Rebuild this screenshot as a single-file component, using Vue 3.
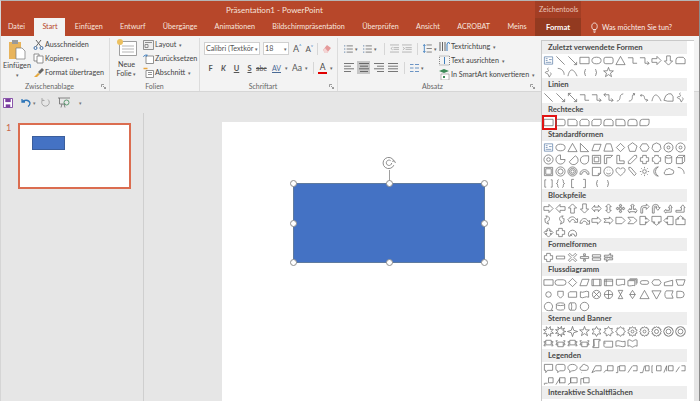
<script setup>
const poly = (n, r = 4.6, rot = -90, inner = null) => {
  const pts = []
  const count = inner ? n * 2 : n
  for (let i = 0; i < count; i++) {
    const a = ((rot + (360 / count) * i) * Math.PI) / 180
    const rad = inner && i % 2 ? inner : r
    pts.push(`${(6 + rad * Math.cos(a)).toFixed(2)} ${(6 + rad * Math.sin(a)).toFixed(2)}`)
  }
  return 'M' + pts.join('L') + 'Z'
}
const circ = (r, cx = 6, cy = 6) => `M${cx - r} ${cy}a${r} ${r} 0 1 0 ${2 * r} 0a${r} ${r} 0 1 0 ${-2 * r} 0Z`

const P = {
  tb: 'M1.5 2h9v8h-9zM3 4h2M3 6h2M6.5 5h3M3 8h6',
  line: 'M1.5 1.5L10.5 10.5',
  arrow: 'M1.5 1.5L10.5 10.5M10.5 7.5v3h-3',
  darrow: 'M1.5 1.5L10.5 10.5M10.5 7.5v3h-3M1.5 4.5v-3h3',
  rect: 'M1 2.5h10v7H1z',
  oval: 'M1 6a5 3.6 0 1 0 10 0a5 3.6 0 1 0-10 0',
  rrect: 'M3 2.5h6a2 2 0 0 1 2 2v3a2 2 0 0 1-2 2H3a2 2 0 0 1-2-2v-3a2 2 0 0 1 2-2z',
  tri: 'M6 1.5L11 10.5H1z',
  rtri: 'M1.5 1.5L10.5 10.5H1.5z',
  elbow: 'M1 3h5.5v6H11',
  elbowA: 'M1 3h5.5v6H11M9 7l2 2-2 2',
  elbowD: 'M3 1L1 3l2 2M1 3h5.5v6H11M9 7l2 2-2 2',
  rarrow: 'M1 4h5.5V1.5L11 6l-4.500 4.500V8H1z',
  darrowB: 'M4 1h4v5.500h2.500L6 11 1.500 6.500H4z',
  uarrowB: 'M4 11h4V5.500h2.500L6 1 1.500 5.500H4z',
  larrowB: 'M11 4H5.500V1.500L1 6l4.500 4.500V8H11z',
  lrarrow: 'M1 6l3-3.500V4.500h4V2.500L11 6 8 9.500V7.500H4v2z',
  udarrow: 'M6 1l3 3H7.500v4H9l-3 3-3-3h1.500V4H3z',
  quad: 'M6 1l1.500 2h-1v2.500H9v-1l2 1.500-2 1.500v-1H6.500V9h1L6 11 4.500 9h1V6.500H3v1L1 6l2-1.500v1h2.500V3h-1z',
  lrup: 'M6 1l2 2H7v4h2V6l2 2.500-2 2.500v-1.500H3V11L1 8.500 3 6v1h2V3H4z',
  bent: 'M2 11V6a3 3 0 0 1 3-3h3V1l3 3-3 3V5H5a1 1 0 0 0-1 1v5z',
  uturn: 'M1.500 11V5a3.500 3.500 0 0 1 7 0h1.500L7.500 8 5 5h1.500a1.500 1.500 0 0 0-3 0v6z',
  lup: 'M1 9l2-2v1h4V5H6l2-3 2 3H9v5H3v1z',
  bentup: 'M1 8h6V5H6l2.500-3L11 5h-1v5H1z',
  curveR: 'M3 1C8 1 8 6 5 7l1 3-3.500-2L2 4c2 0 3-1 1-3z',
  curveL: 'M9 1C4 1 4 6 7 7l-1 3 3.500-2L10 4C8 4 7 3 9 1z',
  curveU: 'M1 5c3-4 7-4 9 0l1.500-1v4H8l1-1c-2-3-4-3-6 1z',
  curveD: 'M1 9c1-6 7-7 9-2l1.500-1v4H8l1-1C7 6 4 6 3.500 9z',
  strip: 'M1 4h6V2l4 4-4 4V8H1z',
  notch: 'M1 4h6V2l4 4-4 4V8H1l2-2z',
  penta: 'M1 2.500h6.500L11 6l-3.500 3.500H1z',
  chev: 'M1 2.500h6L11 6 7 9.500H1L4 6z',
  callR: 'M1 1.500h6v3h1V3l3 3-3 3V7.500H7v3H1z',
  callD: 'M1 1.500h10v6H8v1h1.500L6 11 2.500 8.500H4v-1H1z',
  callL: 'M11 1.500H5v3H4V3L1 6l3 3V7.500h1v3h6z',
  callU: 'M1 10.500h10v-6H8v-1h1.500L6 1 2.500 3.500H4v1H1z',
  callQ: 'M4 4h1V3H4l2-2 2 2H7v1h1v1h1V4l2 2-2 2V7H8v1h1v0L6 11 3 8h1V7H3v1L1 6l2-2v1h1z',
  cross: 'M4 1.500h4V4h2.500v4H8v2.500H4V8H1.500V4H4z',
  circArrow: 'M2 10a4.500 4.500 0 1 1 8 0H8.500a2.500 2.500 0 1 0-5 0zM4 8l1.500 2',
  minus: 'M1.500 4.500h9v3h-9z',
  times: 'M3 1.500l3 3 3-3 1.500 1.500-3 3 3 3L9 10.500l-3-3-3 3L1.500 9l3-3-3-3z',
  divide: 'M1.500 5h9v2h-9zM5 2h2v2H5zM5 8h2v2H5z',
  equal: 'M1.500 3h9v2.500h-9zM1.500 6.500h9V9h-9z',
  neq: 'M1.500 3.500h5l1-2 1 .500-1 1.500h3v2H7l-.5 1h4v2h-5l-1 2-1-.5 1-1.500h-3v-2h4l.5-1h-4.500z',
  para: 'M3.500 2.500H11L8.500 9.500H1z',
  trap: 'M3.500 2H8.500L11 10H1z',
  dia: 'M6 1.500l4.500 4.500-4.500 4.500L1.500 6z',
  pent: poly(5, 5.2),
  hex: 'M3.500 2h5L11 6 8.500 10h-5L1 6z',
  hept: poly(7, 5),
  n10: poly(10, 5) + circ(1.6),
  n12: poly(12, 5) + circ(1.6),
  ring: circ(5) + 'M4 6a2 2 0 1 0 4 0a2 2 0 1 0-4 0',
  pie: 'M6 6V1a5 5 0 1 0 5 5z',
  chord: 'M9 2A5 5 0 1 1 2.500 8.500z',
  tear: 'M6 2a4.500 4.500 0 1 0 4.500 4.500V2z',
  frame: 'M1.500 1.500h9v9h-9zM3.500 3.500h5v5h-5z',
  half: 'M1.500 1.500h9L8 4H4v6.500H1.500z',
  lshape: 'M2 1.500h3v6h5v3H2z',
  diag: 'M1.500 8L8 1.500h2.500V4L4 10.500H1.500z',
  plaque: 'M4 1.500h4a2 2 0 0 0 2.500 2.500v4A2 2 0 0 0 8 10.500H4A2 2 0 0 0 1.500 8V4A2 2 0 0 0 4 1.500z',
  can: 'M2.500 3a3.500 1.500 0 0 1 7 0v6a3.500 1.500 0 0 1-7 0zM2.500 3a3.500 1.500 0 0 0 7 0',
  cube: 'M1.500 4h6.500v6.500H1.500zM1.500 4L4 1.500h6.500L8 4M10.500 1.500V8L8 10.500',
  bevel: 'M1.500 1.500h9v9h-9zM3 3h6v6H3z',
  donut: circ(5) + circ(2.8),
  target: circ(5) + circ(3.4) + circ(1.8),
  arcB: 'M1 9a5 5 0 0 1 10 0H9A3 3 0 0 0 3 9z',
  fold: 'M1.500 1.500h9V8L8 10.500H1.500zM8 10.500V8h2.500',
  smile: circ(5) + 'M3.500 7.500c1 1.500 4 1.500 5 0M4.300 4.500h.5M7.300 4.500h.5',
  heart: 'M6 10.500C2 7.500 1 6 1 4.200 1 2 4.500 1 6 3.500 7.500 1 11 2 11 4.200 11 6 10 7.500 6 10.500z',
  bolt: 'M2 1.500l2 0 6 7-2 2-6-7z',
  sun: circ(2) + 'M6 1v1.500M6 9.500V11M1 6h1.500M9.500 6H11M2.500 2.500l1 1M8.500 8.500l1 1M2.500 9.500l1-1M8.500 3.500l1-1',
  moon: 'M8 1a5.500 5.500 0 0 0 0 10A5 5 0 0 1 8 1z',
  cloud: 'M3 9.500a2 2 0 0 1-.5-3.800A2 2 0 0 1 5 3.500a2.500 2.500 0 0 1 4 .5 2.500 2.500 0 0 1 .5 5z',
  arc: 'M3 1.500c4 0 7 3 7 7',
  dbrack: 'M3.500 2H2v8h1.500M8.500 2H10v8H8.500',
  dbrace: 'M4 1.500c-2 0 0 4.500-2.500 4.500C4 6 2 10.500 4 10.500M8 1.500c2 0 0 4.500 2.500 4.500C8 6 10 10.500 8 10.500',
  lbrack: 'M7.500 1.500H5v9h2.500',
  rbrack: 'M4.500 1.500H7v9H4.500',
  lbrace: 'M7.500 2.500c-2 0 0 3.500-2 3.500 2 0 0 3.500 2 3.500',
  rbrace: 'M4.500 2.500c2 0 0 3.500 2 3.500-2 0 0 3.500-2 3.500',
  star5: poly(5, 5.6, -90, 2.3),
  star4: poly(4, 5.6, -90, 1.9),
  star6: poly(6, 5.4, -90, 3),
  star7: poly(7, 5.4, -90, 3.4),
  star8: poly(8, 5.4, -90, 3.8),
  star10: poly(10, 5.4, -90, 3.9) + circ(1.6),
  star12: poly(12, 5.4, -90, 4.1) + circ(1.6),
  star16: poly(16, 5.4, -90, 4.4) + circ(2.2),
  star24: poly(24, 5.4, -90, 4.6) + circ(2.6),
  star32: poly(32, 5.4, -90, 4.8) + circ(2.6),
  expl1: poly(8, 5.8, -70, 3),
  expl2: poly(9, 5.8, -40, 2.8),
  ribbonU: 'M3 2.500h6v5H3zM3 4H1l1 2-1 2.500h2M9 4h2l-1 2 1 2.500H9',
  ribbonD: 'M3 4.500h6v5H3zM3 3H1l1 2-1 2.500h2M9 3h2l-1 2 1 2.500H9',
  scrollV: 'M3 1.500h7v1.500H8.500v7.500H2V9h1.500zM3 1.500V9',
  scrollH: 'M1 3.500h9.500v6.500H3c-1 0-2-.5-2-1.500zM1 5.500h2',
  wave: 'M1 3.500c3-2 7 2 10 0v5.500c-3 2-7-2-10 0z',
  dwave: 'M1 2.500c2-1.500 3 .5 5 1 2-.5 3-2.500 5-1v6.500c-2-1.500-3 .5-5 1-2-.5-3-2.500-5-1z',
  curve1: 'M2 10C8 9 3 3 9 2',
  curve2: 'M2 10C9 9 3 3 8.500 2M6.500 1.500l2 .5-1 2',
  curve3: 'M3 3l-1.500 .5 1 1.500M2 3.500C9 3 3 9 9.500 9M8 7.500l1.500 1.500L8 10.500',
  curve: 'M1 10C3 1 7 1 11 10',
  free: 'M1 9l2-5 3-2h3l2 3v5H5z',
  scrib: 'M6 1c-3 1 2 3-1 4-3-.5-3 2-1 2s2 3 3 4c.5-2 3-3 1-5',
  snip1: 'M1 2.500h8l2 2v5H1z',
  snip2: 'M3 2.500h6l2 2v5H1v-5z',
  snipD: 'M3 2.500h8v5l-2 2H1v-5z',
  round1: 'M1 2.500h7a3 3 0 0 1 3 3v4H1z',
  round2: 'M4 2.500h4a3 3 0 0 1 3 3v4H1v-4a3 3 0 0 1 3-3z',
  roundD: 'M4 2.500h7v4a3 3 0 0 1-3 3H1v-4a3 3 0 0 1 3-3z',
  snipR: 'M4 2.500h5l2 2v5H1v-4a3 3 0 0 1 3-3z',
  fProc: 'M1 3h10v6H1z',
  fAlt: 'M3 3h6a3 3 0 0 1 0 6H3a3 3 0 0 1 0-6z',
  fPred: 'M1 2.500h10v7H1zM2.500 2.500v7M9.500 2.500v7',
  fInt: 'M1.500 2.500h9v7h-9zM1.500 4.500h9M3.500 2.500v7',
  fDoc: 'M1.500 2.500h9v6c-3-1.500-6 2-9 0z',
  fMulti: 'M3 2h8v5M2 3h8v5.500M1 4h7.500v5.500c-2-1-5 1-7.500 0z',
  fTerm: 'M3.500 4h5a2 2 0 0 1 0 4h-5a2 2 0 0 1 0-4z',
  fPrep: 'M3 3h6l2 3-2 3H3L1 6z',
  fManual: 'M1.500 6l9-2.500v6h-9z',
  fTrap: 'M1 3h10l-2 6H3z',
  fCirc: circ(3),
  fOff: 'M3 2.500h6v4.500L6 10 3 7z',
  fCard: 'M3 3h7.500v6h-9V4.500z',
  fTape: 'M1.500 3c3 2 6-2 9 0v6c-3-2-6 2-9 0z',
  fSum: circ(4.5) + 'M2.800 2.800l6.400 6.400M9.200 2.800l-6.400 6.400',
  fOr: circ(4.5) + 'M6 1.500v9M1.500 6h9',
  fColl: 'M3.500 1.500h5L3.500 10.500h5z',
  fSort: 'M6 1.500l3 4.500-3 4.500L3 6zM3 6h6',
  fMerge: 'M6 1.500l5 9H1z',
  fMrg: 'M1 2h10l-5 9z',
  fStore: 'M3.500 2H11L9.500 6 11 10H3.500C1.500 8 1.500 4 3.500 2z',
  fDelay: 'M2 2.500h4.500a3.500 3.500 0 0 1 0 7H2z',
  fSeq: 'M6 10.500a4.500 4.500 0 1 1 3-1.200l2 1.200z',
  fDisk: 'M1.500 3.500a4.500 1.500 0 0 1 9 0v5a4.500 1.500 0 0 1-9 0zM1.500 3.500a4.500 1.500 0 0 0 9 0',
  fDirect: 'M3.500 2h5c2 0 2 8 0 8h-5c-2 0-2-8 0-8zM4 2c1.500 0 1.500 8 0 8',
  fDisp: circ(4.6),
  cRect: 'M1.500 1.500h9v6.500H5L3 10.500V8H1.500z',
  cRound: 'M3 1.500h6a2 2 0 0 1 2 2v3a2 2 0 0 1-2 2H5L3 10.500V8.500a2 2 0 0 1-2-2v-3a2 2 0 0 1 2-2z',
  cOval: 'M6 1.500c3 0 5 1.500 5 3.500s-2 3.500-5 3.500H5L3 10.500V8C1.500 7.500 1 6.500 1 5c0-2 2-3.500 5-3.500z',
  cCloud: 'M3 8a2 2 0 0 1 0-4 2.500 2.500 0 0 1 4.500-1.500A2.500 2.500 0 0 1 10 6a2 2 0 0 1-2 2zM2.500 10.500h.5',
  cLine1: 'M1 10.500L5 3h6v5.500H5z',
  cLine2: 'M1 10.500L3 8h2M5 3h6v5.500H5z',
  cLine3: 'M1 10.500h2V4h2M5 3h6v5.500H5z',
  cBar1: 'M1 10.500L6 3M6.500 3h4.500v5.500H6.500',
  cBar2: 'M1 10.500h3L6 3M7 3h4v5.500H7z',
  cBar3: 'M2 10.500H1V3h1M6 3h5v5.500H6z',
  cBar4: 'M1 10.500L4 3M4 3v6M6 3h5v5.500H6z',
  cBar5: 'M1 10L5 4M7 3h4v5.500H7',
  cBar6: 'M2 10.500c-1 0-1-1.500 0-1.500h3M6 3h5v5.500H6z',
  cBar7: 'M1 10.500L5 4v5M5 3h6v5.500H5z',
  cBar8: 'M1 10.500l3-2V3M4 3h7v5.500H4z',
  cBar9: 'M2 10.500V4h3M5 3h6v5.500H5z'
}

const sections = [
  { title: 'Zuletzt verwendete Formen', icons: ['tb','line','arrow','rect','oval','rrect','tri','elbow','elbowA','rarrow','darrowB','snipR','scrib','arc','curve','lbrace','rbrace','star5'] },
  { title: 'Linien', icons: ['line','arrow','darrow','elbow','elbowA','elbowD','curve1','curve2','curve3','curve','free','scrib'] },
  { title: 'Rechtecke', icons: ['rect','rrect','snip1','snip2','snipD','snipR','round1','round2','roundD'] },
  { title: 'Standardformen', icons: ['tb','oval','tri','rtri','para','trap','dia','pent','hex','hept','n10','n12','ring','pie','chord','tear','frame','half','lshape','diag','cross','plaque','can','cube','bevel','donut','target','arcB','fold','smile','heart','bolt','sun','moon','cloud','arc','dbrack','dbrace','lbrack','rbrack','lbrace','rbrace'] },
  { title: 'Blockpfeile', icons: ['rarrow','larrowB','uarrowB','darrowB','lrarrow','udarrow','quad','lrup','bent','uturn','lup','bentup','curveR','curveL','curveU','curveD','strip','notch','penta','chev','callR','callD','callL','callU','callQ','cross','circArrow'] },
  { title: 'Formelformen', icons: ['cross','minus','times','divide','equal','neq'] },
  { title: 'Flussdiagramm', icons: ['fProc','fAlt','dia','para','fPred','fInt','fDoc','fMulti','fTerm','fPrep','fManual','fTrap','fCirc','fOff','fCard','fTape','fSum','fOr','fColl','fSort','fMerge','fMrg','fStore','fDelay','fSeq','fDisk','fDirect','fDisp'] },
  { title: 'Sterne und Banner', icons: ['expl1','expl2','star4','star5','star6','star7','star8','star10','star12','star16','star24','star32','ribbonU','ribbonD','ribbonU','ribbonD','scrollV','scrollH','wave','dwave'] },
  { title: 'Legenden', icons: ['cRect','cRound','cOval','cCloud','cLine1','cLine2','cLine3','cBar1','cBar2','cBar3','cBar4','cBar5','cBar6','cBar7','cBar8','cBar9'] },
  { title: 'Interaktive Schaltflächen', icons: [] }
]

const tabs = ['Datei','Start','Einfügen','Entwurf','Übergänge','Animationen','Bildschirmpräsentation','Überprüfen','Ansicht','ACROBAT','Meins']
const handles = ['tl','tc','tr','ml','mr','bl','bc','br']
</script>

<template>
  <div class="app">
    <div class="titlebar">
      <span class="doc-title">Präsentation1 - PowerPoint</span>
      <span class="context">Zeichentools</span>
    </div>
    <div class="tabbar">
      <div class="tabs">
        <span v-for="t in tabs" :key="t" class="tab" :class="{ active: t === 'Start' }">{{ t }}</span>
      </div>
      <span class="format">Format</span>
      <span class="tellme">
        <svg width="9" height="11" viewBox="0 0 9 11" fill="none" stroke="#fff" stroke-width=".8"><path d="M3 7.500C1 5.500 1.500 1 4.500 1S8 5.500 6 7.500zM3.200 9h2.600M3.700 10.300h1.600"/></svg>
        Was möchten Sie tun?
      </span>
    </div>

    <div class="ribbon">
      <section class="group g-clip">
        <div class="group-body">
          <div class="big">
            <svg width="18" height="21" viewBox="0 0 18 21"><path d="M1 3h12v17H1z" fill="#e8b45c"/><path d="M4 1h6v4H4z" fill="#9a9a9a"/><path d="M8 9h6l3 3v8H8z" fill="#fff" stroke="#777" stroke-width=".7"/></svg>
            <span>Einfügen</span>
            <span class="chev">▾</span>
          </div>
          <div class="stack">
            <span class="cmd"><svg width="11" height="11" viewBox="0 0 11 11" fill="none" stroke="#3f6fa8" stroke-width="1"><circle cx="2.500" cy="9" r="1.500"/><circle cx="8.500" cy="9" r="1.500"/><path d="M3 7.500L8 1M8 7.500L3 1" stroke="#666"/></svg>Ausschneiden</span>
            <span class="cmd"><svg width="11" height="11" viewBox="0 0 11 11" fill="#fff" stroke="#777" stroke-width=".8"><path d="M1 1h5v7H1z"/><path d="M4 3h6v7H4z"/></svg>Kopieren<i class="chev wide">▾</i></span>
            <span class="cmd"><svg width="11" height="11" viewBox="0 0 11 11"><path d="M1 10l4-4 2 1-3 3z" fill="#e6a93f"/><path d="M5 5l4-4 2 2-4 4z" fill="#666"/></svg>Format übertragen</span>
          </div>
        </div>
        <footer>Zwischenablage<svg class="launcher" width="5" height="5" viewBox="0 0 5 5" fill="none" stroke="#777" stroke-width=".7"><path d="M.5 3V.5H3M2 2l2.500 2.500M4.500 3v1.500H3"/></svg></footer>
      </section>

      <section class="group g-slides">
        <div class="group-body">
          <div class="big new-slide">
            <svg width="20" height="17" viewBox="0 0 20 17"><path d="M2.500 2.500h17v14h-17z" fill="#fff" stroke="#888" stroke-width=".8"/><path d="M5 7h12M5 10h12M5 13h12" stroke="#b5b5b5"/><circle cx="3" cy="3" r="3" fill="#ecc05f"/></svg>
            <span class="mt">Neue</span>
            <span>Folie <i class="chev">▾</i></span>
          </div>
          <div class="stack">
            <span class="cmd"><svg width="11" height="10" viewBox="0 0 11 10" fill="#eee" stroke="#777" stroke-width=".8"><path d="M.5.500h10v9H.5zM2 2.500h7M2 4.500h3v3H2z"/></svg>Layout<i class="chev">▾</i></span>
            <span class="cmd"><svg width="11" height="10" viewBox="0 0 11 10" fill="#fff" stroke="#777" stroke-width=".8"><path d="M3 2h7.500v7.500H3z"/><path d="M.5 3C1 1 3 .5 4 1.500M4 .5v1.500H2.500" stroke="#2b6fb5"/></svg>Zurücksetzen</span>
            <span class="cmd"><svg width="11" height="11" viewBox="0 0 11 11" fill="#fff" stroke="#777" stroke-width=".8"><path d="M3 3.500h7.500v7H3z"/><path d="M.5 1.500h4" stroke="#e9a43c" stroke-width="1.500"/><path d="M5 5.500h4M5 7.500h4"/></svg>Abschnitt<i class="chev">▾</i></span>
          </div>
        </div>
        <footer class="centered">Folien</footer>
      </section>

      <section class="group g-font">
        <div class="font-body">
          <div class="font-row top">
            <span class="combo font-combo"><span>Calibri (Textkör</span><i class="chev">▾</i></span>
            <span class="combo size-combo"><span>18</span><i class="chev">▾</i></span>
            <b class="grow">A<sup>˄</sup></b>
            <b class="grow small">A<sup>˅</sup></b>
            <span class="vsep"></span>
            <svg width="10" height="10" viewBox="0 0 10 10"><path d="M1 6l4-5 4 3-4 5H3z" fill="#e59a9a"/><path d="M1 6l2 3h2l1-1.500L3 4z" fill="#f4d5d5"/></svg>
          </div>
          <div class="font-row bottom">
            <b>F</b><b class="it">K</b><b class="ul">U</b><b class="ul">S</b><span class="strike">abc</span>
            <span class="av">AV</span><i class="chev">▾</i>
            <span class="aa">Aa</span><i class="chev">▾</i>
            <span class="vsep"></span>
            <span class="colorA">A</span><i class="chev">▾</i>
          </div>
        </div>
        <footer>Schriftart<svg class="launcher" width="5" height="5" viewBox="0 0 5 5" fill="none" stroke="#777" stroke-width=".7"><path d="M.5 3V.5H3M2 2l2.500 2.500M4.500 3v1.500H3"/></svg></footer>
      </section>

      <section class="group g-para">
        <div class="group-body para-body">
          <div class="para-left">
            <div class="para-row">
              <svg width="10" height="10" viewBox="0 0 10 10" fill="none" stroke="#5a7fa8"><path d="M0 1.500h1.500M0 5h1.500M0 8.500h1.500"/><path d="M3 1.500h7M3 5h7M3 8.500h7" stroke="#777"/></svg><i class="chev">▾</i>
              <svg width="10" height="10" viewBox="0 0 10 10" fill="none" stroke="#5a7fa8"><path d="M0 1.500h1.500M0 5h1.500M0 8.500h1.500"/><path d="M3 1.500h7M3 5h7M3 8.500h7" stroke="#777"/></svg><i class="chev">▾</i>
              <span class="vsep"></span>
              <svg width="11" height="9" viewBox="0 0 11 9" fill="none" stroke="#b0b0b0"><path d="M0 .5h11M4 3.500h7M4 5.500h7M0 8.500h11M3 3L1 4.500 3 6"/></svg>
              <svg width="11" height="9" viewBox="0 0 11 9" fill="none" stroke="#b0b0b0"><path d="M0 .5h11M4 3.500h7M4 5.500h7M0 8.500h11M1 3l2 1.500L1 6"/></svg>
              <span class="vsep"></span>
              <svg width="10" height="11" viewBox="0 0 10 11" fill="none" stroke="#777"><path d="M4 1.500h6M4 5.500h6M4 9.500h6"/><path d="M1.500 1v9M.3 2.500l1.200-1.500 1.200 1.500M.3 8.500l1.200 1.500 1.200-1.500" stroke="#3f7fbf"/></svg><i class="chev">▾</i>
            </div>
            <div class="para-row">
              <svg class="al" width="10" height="9" viewBox="0 0 10 9" fill="none" stroke="#777"><path d="M0 .5h10M0 3.200h7M0 5.800h10M0 8.500h7"/></svg>
              <span class="pressed"><svg width="10" height="9" viewBox="0 0 10 9" fill="none" stroke="#666"><path d="M0 .5h10M1 3.200h8M0 5.800h10M1 8.500h8"/></svg></span>
              <svg class="al" width="10" height="9" viewBox="0 0 10 9" fill="none" stroke="#777"><path d="M0 .5h10M3 3.200h7M0 5.800h10M3 8.500h7"/></svg>
              <svg class="al" width="10" height="9" viewBox="0 0 10 9" fill="none" stroke="#777"><path d="M0 .5h10M0 3.200h10M0 5.800h10M0 8.500h10"/></svg>
              <span class="vsep"></span>
              <svg width="9" height="8" viewBox="0 0 9 8" fill="none" stroke="#6b94c4"><path d="M0 .5h3.500M5 .5h4M0 4h3.500M5 4h4M0 7.500h3.500M5 7.500h4"/></svg><i class="chev">▾</i>
            </div>
          </div>
          <div class="stack para-stack">
            <span class="cmd"><svg width="11" height="11" viewBox="0 0 11 11" fill="none" stroke="#666"><path d="M1 1v9M3.500 1v9M6 1v9"/><path d="M8 10V3l1.500-2L11 3" stroke="#3f7fbf"/></svg>Textrichtung<i class="chev">▾</i></span>
            <span class="cmd"><svg width="11" height="11" viewBox="0 0 11 11" fill="none" stroke="#888" stroke-dasharray="1 1"><path d="M.5 1h10v9H.5z"/><path d="M5.500 2v7" stroke="#3f7fbf" stroke-dasharray="none"/></svg>Text ausrichten<i class="chev">▾</i></span>
            <span class="cmd"><svg width="11" height="11" viewBox="0 0 11 11"><path d="M0 2l5-2 5 2-5 2z" fill="#3c8a58"/><path d="M2 5h8v6H2z" fill="#fff" stroke="#999" stroke-width=".7"/><path d="M4 7h2v2H4z" fill="#3c8a58"/></svg>In SmartArt konvertieren<i class="chev">▾</i></span>
          </div>
        </div>
        <footer>Absatz<svg class="launcher" width="5" height="5" viewBox="0 0 5 5" fill="none" stroke="#777" stroke-width=".7"><path d="M.5 3V.5H3M2 2l2.500 2.500M4.500 3v1.500H3"/></svg></footer>
      </section>
    </div>

    <div class="qat">
      <svg width="10" height="10" viewBox="0 0 11 11"><path d="M.5.500h10v10H.5z" fill="#fff" stroke="#7b3fa0" stroke-width="1"/><path d="M2.500 1v3.500h6V1z" fill="#7b3fa0"/><path d="M3 7h5v3.500H3z" fill="#7b3fa0"/></svg>
      <svg class="undo" width="10" height="9" viewBox="0 0 10 9" fill="none" stroke="#2f76b8" stroke-width="1.300"><path d="M1 1v3h3M1.200 4C3 1.500 8 1.500 9 5c0 1.500-1 3-2 3.500"/></svg>
      <i class="chev dark">▾</i>
      <svg class="redo" width="9" height="9" viewBox="0 0 9 9" fill="none" stroke="#a8a8a8" stroke-width="1"><path d="M7 1.500A3.800 3.800 0 1 1 2 1.500M1 0v2.500h2.500"/></svg>
      <svg class="pres" width="12" height="11" viewBox="0 0 12 11" fill="none" stroke="#6a6a6a" stroke-width=".8"><path d="M0 1h12M1.500 1v6h6M4 7l-1 3.500M6 7l1 3.500"/><circle cx="8.500" cy="5.500" r="2.500" stroke="#3c8a58"/></svg>
      <i class="chev dark more">▾</i>
    </div>

    <div class="main">
      <aside class="thumbs">
        <span class="num">1</span>
        <div class="thumb"><div class="mini-shape"></div></div>
      </aside>
      <div class="stage">
        <div class="slide">
          <div class="rotator">
            <svg width="14" height="14" viewBox="0 0 13 13" fill="none" stroke="#8a8a8a" stroke-width=".9"><path d="M11 8.500A5.200 5.200 0 1 1 11 4.500M9 6.500a2.500 2.500 0 1 1-1-2.200M11.500 4.500l1 2M11.500 4.500l-2 .5"/></svg>
            <span class="stem"></span>
          </div>
          <div class="shape">
            <span v-for="h in handles" :key="h" class="handle" :class="h"></span>
          </div>
        </div>
      </div>
    </div>

    <div class="gallery">
      <div v-for="s in sections" :key="s.title" class="gal-section">
        <h4>{{ s.title }}</h4>
        <div class="gal-icons">
          <span v-for="(k, i) in s.icons" :key="i" class="gal-icon" :class="{ picked: s.title === 'Rechtecke' && i === 0 }">
            <svg width="11" height="11" viewBox="0 0 12 12"><path :d="P[k]" :class="{ tbx: k === 'tb' }"/></svg>
          </span>
        </div>
      </div>
    </div>
  </div>
</template>

<style>
html, body { margin: 0; overflow: hidden; }
</style>

<style scoped>
.app {
  position: relative;
  width: 700px;
  height: 401px;
  box-sizing: border-box;
  border-top: 1px solid #b5b5b5;
  border-left: 1px solid #d5d5d5;
  border-right: 1px solid #8c8c8c;
  background: #e6e6e6;
  display: flex;
  flex-direction: column;
  overflow: hidden;
  font-family: Lato, "Open Sans", sans-serif;
  font-size: 7.200px;
  color: #444;
}
.titlebar {
  height: 17px;
  background: #b7472a;
  position: relative;
  display: flex;
  align-items: center;
  color: #f6e3dc;
  flex: none;
  padding-left: 225px;
  font-size: 8px;
}
.context {
  position: absolute;
  left: 534px;
  top: 0;
  width: 46px;
  height: 17px;
  box-sizing: border-box;
  padding-left: 4px;
  background: #a33e24;
  color: #eac6ba;
  font-size: 7px;
  line-height: 17px;
}
.tabbar {
  height: 18px;
  background: #b7472a;
  display: flex;
  align-items: stretch;
  flex: none;
  font-size: 7.200px;
}
.tabs {
  width: 534px;
  display: flex;
  gap: 1.400px;
  flex: none;
  box-sizing: border-box;
  margin-left: -1px;
  margin-right: 1px;
}
.tab {
  padding: 0 8px;
  color: #f8e6df;
  line-height: 18px;
}
.tab.active {
  background: #f3f3f3;
  color: #b7472a;
}
.format {
  width: 46px;
  flex: none;
  text-align: center;
  line-height: 18px;
  background: #933a20;
  color: #fff;
  font-weight: 700;
  font-size: 7.600px;
}
.tellme {
  margin-left: 9px;
  display: flex;
  align-items: center;
  gap: 3px;
  color: #fbeee9;
  font-size: 7.200px;
}
.ribbon {
  height: 56px;
  background: #f3f3f3;
  border-bottom: 1px solid #d6d6d6;
  box-sizing: border-box;
  display: flex;
  flex: none;
}
.group {
  display: flex;
  flex-direction: column;
  box-sizing: border-box;
  border-right: 1px solid #dcdcdc;
  margin: 2px 0 0;
  position: relative;
}
.g-clip { width: 109px; }
.g-slides { width: 90px; }
.g-font { width: 138px; }
.g-para { width: 200px; border-right: none; }
.group-body { flex: 1; display: flex; min-height: 0; }
.group footer {
  height: 10px;
  line-height: 10px;
  text-align: center;
  color: #666;
  font-size: 7px;
  padding-right: 11px;
}
.group footer.centered { padding-right: 0; }
.launcher { position: absolute; right: 3px; bottom: 2px; }
.big {
  width: 30px;
  display: flex;
  flex-direction: column;
  align-items: center;
  line-height: 8.500px;
  margin-left: 1px;
  flex: none;
  padding-top: 1px;
}
.big svg { margin-bottom: 2px; }
.big .mt { margin-top: 3px; }
.new-slide { margin-left: 4px; width: 25px; }
.chev { font-style: normal; font-size: 5px; color: #666; line-height: 8px; }
.chev.wide { margin-left: 8px; }
.chev.dark { color: #777; }
.stack {
  display: flex;
  flex-direction: column;
  gap: 3px;
  margin-left: 1px;
  padding-top: 1px;
}
.cmd {
  display: flex;
  align-items: center;
  gap: 1px;
  height: 11px;
  white-space: nowrap;
  color: #444;
}
.cmd svg { flex: none; width: 11px; }
.cmd .chev { margin-left: 2px; }
.g-slides .stack { margin-left: 4px; }
.font-body { flex: 1; padding: 4px 0 0 4px; display: flex; flex-direction: column; gap: 5px; }
.font-row { display: flex; align-items: center; }
.font-row.top { height: 13px; gap: 4px; }
.combo {
  height: 13px;
  background: #fff;
  border: 1px solid #d0d0d0;
  box-sizing: border-box;
  display: flex;
  align-items: center;
  justify-content: space-between;
  padding: 0 1px 0 1px;
  color: #555;
  white-space: nowrap;
  overflow: hidden;
}
.font-combo { width: 56px; }
.size-combo { width: 26px; margin-left: -1px; }
.grow { font-size: 9px; font-weight: 400; color: #555; }
.grow.small { font-size: 8px; }
.grow sup { font-size: 5px; color: #2b6fb5; vertical-align: top; line-height: 6px; }
.font-row.top .vsep { margin: 0; }
.vsep { width: 1px; height: 12px; background: #d6d6d6; margin: 0 2px; flex: none; }
.font-row.bottom { height: 14px; gap: 0; margin-top: 1px; }
.font-row.bottom b { width: 13px; font-size: 7.500px; text-align: center; color: #555; flex: none; }
.it { font-style: italic; }
.ul { text-decoration: underline; }
.strike { width: 13px; font-size: 7px; text-decoration: line-through; color: #555; flex: none; }
.av { font-size: 7px; margin-left: 3px; color: #4a6a95; border-bottom: 1px solid #4a6a95; line-height: 8px; }
.av + .chev { margin: 0 4px; }
.aa { font-size: 8.500px; color: #555; }
.aa + .chev { margin-left: 3px; margin-right: 3px; }
.colorA { font-size: 8.500px; line-height: 9px; border-bottom: 2px solid #e00000; width: 9px; text-align: center; color: #444; margin: 0 3px 0 2px; }
.para-body { padding: 3px 0 0 6px; }
.para-left { width: 95px; display: flex; flex-direction: column; gap: 6px; flex: none; padding-top: 1px; }
.para-row { display: flex; align-items: center; gap: 3px; height: 13px; }
.para-row .vsep { margin: 0 2px; }
.para-row .chev { margin-left: -1px; margin-right: 2px; }
.al { margin: 0 1px 0 0; }
.pressed {
  width: 13px;
  height: 13px;
  background: #c6c6c6;
  display: flex;
  align-items: center;
  justify-content: center;
  margin: 0 1px 0 -1px;
}
.para-stack { margin-left: 0; padding-top: 0; }
.qat {
  height: 21px;
  display: flex;
  align-items: center;
  padding-left: 2px;
  flex: none;
}
.undo { margin-left: 8px; }
.qat > .chev { margin-left: 2px; }
.redo { margin-left: 5px; }
.pres { margin-left: 8px; }
.qat > .more { margin-left: 9px; }
.main { flex: 1; display: flex; min-height: 0; }
.thumbs {
  width: 143px;
  flex: none;
  box-sizing: border-box;
  border-right: 1px solid #cfcfcf;
  display: flex;
  align-items: flex-start;
  padding-top: 10px;
}
.num { color: #c8674a; font-size: 9px; width: 17px; padding-left: 5px; box-sizing: border-box; line-height: 10px; flex: none; }
.thumb {
  width: 113px;
  height: 66px;
  box-sizing: border-box;
  border: 2px solid #db6d50;
  background: #fff;
  padding: 11px 0 0 12px;
}
.mini-shape {
  width: 33px;
  height: 14px;
  background: #4472c4;
  box-sizing: border-box;
  border: 1px solid #3b5e9c;
}
.stage { flex: 1; padding: 9px 0 0 78px; min-width: 0; }
.slide {
  height: 100%;
  background: #fff;
  position: relative;
  width: 340px;
}
.rotator {
  position: absolute;
  left: 160px;
  top: 34px;
  display: flex;
  flex-direction: column;
  align-items: center;
  width: 14px;
}
.stem { width: 1px; height: 13px; background: #a0a0a0; }
.shape {
  position: absolute;
  left: 71px;
  top: 61px;
  width: 192px;
  height: 80px;
  box-sizing: border-box;
  background: #4472c4;
  border: 1px solid #5e7a9f;
}
.handle {
  position: absolute;
  width: 7px;
  height: 7px;
  box-sizing: border-box;
  border-radius: 50%;
  background: #fff;
  border: 1px solid #8f8f8f;
}
.tl, .tc, .tr { top: -4px; }
.ml, .mr { top: 36px; }
.bl, .bc, .br { bottom: -4px; }
.tl, .ml, .bl { left: -4px; }
.tc, .bc { left: 92px; }
.tr, .mr, .br { right: -4px; }
.gallery {
  position: absolute;
  left: 540px;
  top: 39px;
  width: 153px;
  height: 361px;
  box-sizing: border-box;
  background: #fff;
  border-left: 1px solid #c9c9c9;
  border-top: 1px solid #c9c9c9;
  padding: 0 7px 0 0;
  overflow: hidden;
}
.gal-section h4 {
  margin: 0;
  height: 13px;
  line-height: 13px;
  background: #eeeeee;
  padding-left: 6px;
  font-size: 7.700px;
  font-weight: 700;
  color: #4a4a4a;
}
.gal-icons {
  display: flex;
  flex-wrap: wrap;
}
.gal-icon {
  width: 12px;
  height: 12px;
  display: flex;
  align-items: center;
  justify-content: center;
  position: relative;
}
.gal-icon svg { overflow: visible; }
.gal-icon path {
  fill: none;
  stroke: #6a6a6a;
  stroke-width: .8;
}
.gal-icon path.tbx { stroke: #5f7fa8; }
.picked::after {
  content: "";
  position: absolute;
  left: 0;
  top: -1px;
  width: 15px;
  height: 15px;
  box-sizing: border-box;
  border: 2px solid #e01414;
}
</style>
